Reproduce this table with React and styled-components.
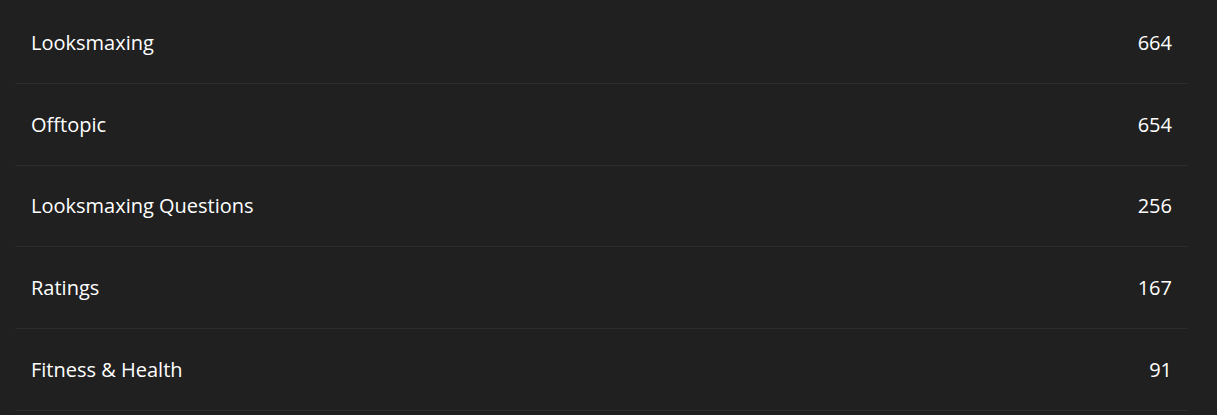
import React from 'react'
import styled, { createGlobalStyle } from 'styled-components'

const GlobalStyle = createGlobalStyle`
  html, body {
    margin: 0;
    background: #202020;
  }
`

const topics = [
  { name: 'Looksmaxing', count: 664 },
  { name: 'Offtopic', count: 654 },
  { name: 'Looksmaxing Questions', count: 256 },
  { name: 'Ratings', count: 167 },
  { name: 'Fitness & Health', count: 91 },
]

function App() {
  return (
    <>
      <GlobalStyle />
      <Page>
        <List>
          {topics.map((t) => (
            <Row key={t.name}>
              <Name>{t.name}</Name>
              <Count>{t.count}</Count>
            </Row>
          ))}
        </List>
      </Page>
    </>
  )
}

const Page = styled.div`
  background: #202020;
  min-height: 415px;
  padding: 2px 29px 0 15px;
  box-sizing: border-box;
  font-family: "Segoe UI", "Open Sans", "Noto Sans", sans-serif;
`
const List = styled.ul`
  list-style: none;
  margin: 0;
  padding: 0;
`
const Row = styled.li`
  display: flex;
  justify-content: space-between;
  align-items: center;
  height: 81.75px;
  box-sizing: border-box;
  padding: 0 16px;
  border-bottom: 1px solid #2c2c2c;
  color: #ffffff;
  font-size: 20px;
`
const Name = styled.span`
  white-space: nowrap;
`
const Count = styled.span`
  font-variant-numeric: tabular-nums;
`

export default App
